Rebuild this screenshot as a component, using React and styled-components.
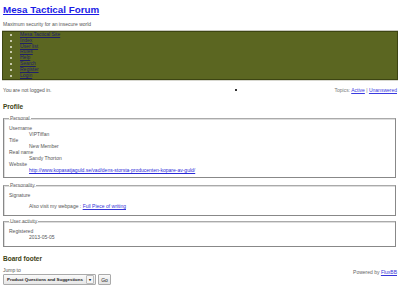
import React from 'react'
import styled, { createGlobalStyle } from 'styled-components'

const Global = createGlobalStyle`
    html, body {
        margin: 0;
        padding: 0;
        background: #fff;
    }
    body {
        font-family: "Liberation Sans", Arial, sans-serif;
        font-size: 5px;
        line-height: 6px;
        color: #333;
    }
    a {
        color: #2a2ad8;
    }
`

const Page = styled.div`
    padding: 3px 3px 0 3px;
    width: 394px;
`

// Header

const Title = styled.h1`
    margin: 1px 0 0;
    font-size: 9.8px;
    line-height: 11px;
    font-weight: bold;
    a {
        color: #1c1ce6;
    }
`

const Tagline = styled.p`
    margin: 6px 0 4px;
    color: #555;
`

const Nav = styled.ul`
    margin: 0 -1px;
    padding: 0 0 1px 17px;
    background: #5b6621;
    border: 1px solid #3d4512;
    box-shadow: 0 -1px 0 #c8c8c0, 0 1px 0 #d8d8d0;
    list-style: disc;
    color: #e8e8d8;
    li {
        line-height: 5.8px;
    }
    a {
        color: #20206a;
    }
`

const Status = styled.div`
    display: flex;
    justify-content: space-between;
    align-items: center;
    margin-top: 7px;
    color: #555;
`

const Bullet = styled.span`
    width: 2px;
    height: 2px;
    background: #333;
    margin-left: 86px;
`

const Topics = styled.span`
    color: #777;
    a {
        color: #3a3ae0;
    }
`

// Profile

const Heading = styled.h2`
    margin: ${({ $top }) => $top}px 0 4px;
    font-size: 6.5px;
    line-height: 8px;
    font-weight: bold;
    color: #3c4214;
`

const Box = styled.fieldset`
    margin: 0 1px ${({ $gap }) => $gap}px 0;
    padding: 4px 5px ${({ $bottom = 4 }) => $bottom}px 5px;
    border: 1px solid #888;
    border-top-color: #aaa;
    box-shadow: inset 1px 1px 0 #ddd;
    legend {
        padding: 0 1px;
        color: #666;
        font-size: 5px;
    }
`

const Dl = styled.dl`
    margin: 0;
    color: #555;
    dt {
        margin: 0;
    }
    dd {
        margin: 0 0 0 20px;
    }
`

const Sig = styled.dd`
    && {
        margin: 5px 0 2px 20px;
    }
    a {
        color: #3535d8;
    }
`

// Footer

const Footer = styled.div`
    display: flex;
    justify-content: space-between;
    align-items: flex-start;
`

const Jump = styled.div`
    color: #555;
    p {
        margin: 0 0 1px;
    }
`

const JumpRow = styled.div`
    display: flex;
    gap: 2px;
`

const Select = styled.div`
    display: flex;
    align-items: center;
    justify-content: space-between;
    width: 93px;
    height: 11px;
    padding: 0 1px 0 3px;
    border: 1px solid #aaa;
    border-radius: 1px;
    background: linear-gradient(#fafafa, #e6e6e6);
    font-weight: bold;
    font-size: 4.4px;
    white-space: nowrap;
    color: #222;
    box-sizing: border-box;
    span.arrow {
        width: 6px;
        height: 7px;
        border: 1px solid #bbb;
        border-radius: 1px;
        background: #f4f4f4;
        display: flex;
        align-items: center;
        justify-content: center;
        font-size: 4px;
    }
`

const Go = styled.button`
    width: 13px;
    height: 11px;
    padding: 0;
    font-family: inherit;
    font-size: 5px;
    border: 1px solid #aaa;
    border-radius: 1px;
    background: linear-gradient(#fafafa, #e2e2e2);
    color: #222;
`

const Powered = styled.p`
    margin: 0;
    padding-top: 2px;
    color: #666;
    a {
        color: #3535d8;
    }
`

const links = ['Mesa Tactical Site', 'Index', 'User list', 'Rules', 'Help', 'Search', 'Register', 'Login']

export default function App() {
    return (
        <Page>
            <Global />
            <Title><a href="#">Mesa Tactical Forum</a></Title>
            <Tagline>Maximum security for an insecure world</Tagline>
            <Nav>
                {links.map((l) => (
                    <li key={l}><a href="#">{l}</a></li>
                ))}
            </Nav>
            <Status>
                <span>You are not logged in.</span>
                <Bullet />
                <Topics>Topics: <a href="#">Active</a> | <a href="#">Unanswered</a></Topics>
            </Status>
            <Heading $top={10}>Profile</Heading>
            <Box $gap={4}>
                <legend>Personal</legend>
                <Dl>
                    <dt>Username</dt>
                    <dd>VIPTiffan</dd>
                    <dt>Title</dt>
                    <dd>New Member</dd>
                    <dt>Real name</dt>
                    <dd>Sandy Thorton</dd>
                    <dt>Website</dt>
                    <dd><a href="#">http://www.kopasatjaguld.se/vad/dens-storsta-producenten-kopare-av-guld/</a></dd>
                </Dl>
            </Box>
            <Box $gap={2}>
                <legend>Personality</legend>
                <Dl>
                    <dt>Signature</dt>
                    <Sig>Also visit my webpage : <a href="#">Full Piece of writing</a></Sig>
                </Dl>
            </Box>
            <Box $gap={0} $bottom={6}>
                <legend>User activity</legend>
                <Dl>
                    <dt>Registered</dt>
                    <dd>2013-05-05</dd>
                </Dl>
            </Box>
            <Heading $top={8}>Board footer</Heading>
            <Footer>
                <Jump>
                    <p>Jump to</p>
                    <JumpRow>
                        <Select>
                            <span>Product Questions and Suggestions</span>
                            <span className="arrow">▾</span>
                        </Select>
                        <Go>Go</Go>
                    </JumpRow>
                </Jump>
                <Powered>Powered by <a href="#">FluxBB</a></Powered>
            </Footer>
        </Page>
    )
}
